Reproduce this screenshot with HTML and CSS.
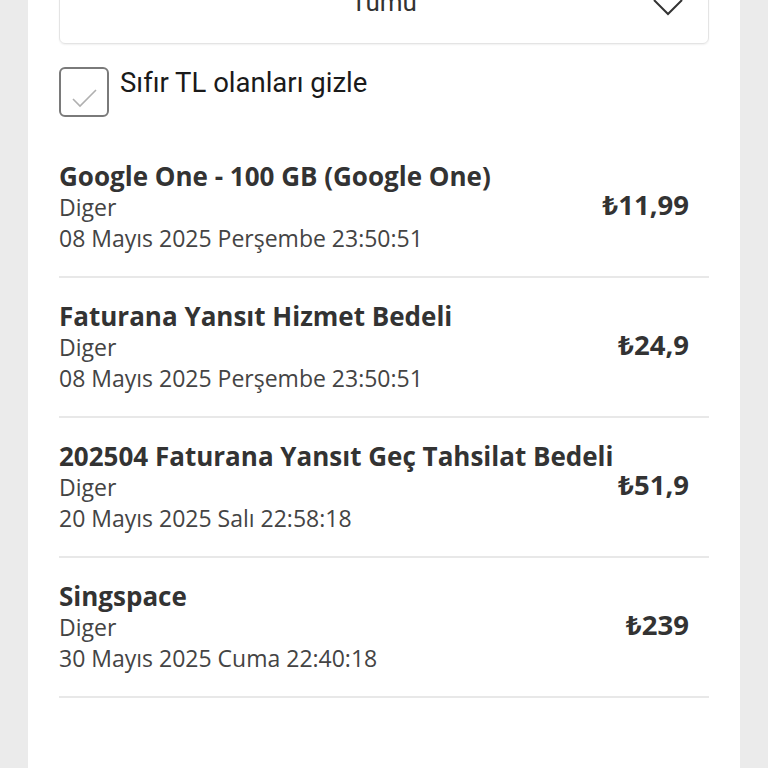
FILE: index.html
```html
<!DOCTYPE html>
<html lang="tr">
<head>
<meta charset="utf-8">
<link rel="stylesheet" href="styles.css">
</head>
<body>
<div class="card">
  <div class="dropdown">
    <span class="dd-text">Tümü</span>
    <svg class="chev" width="32" height="18" viewBox="0 0 32 18"><polyline points="2,1 16,15 30,1" fill="none" stroke="#333" stroke-width="2"/></svg>
  </div>
  <label class="check-row">
    <span class="box"><svg width="46" height="46" viewBox="0 0 46 46"><polyline points="12,30 19,37 35,21" fill="none" stroke="#b0b0b0" stroke-width="1.6"/></svg></span>
    <span class="check-label">Sıfır TL olanları gizle</span>
  </label>
  <ul class="list">
    <li class="item">
      <div class="info">
        <div class="title">Google One - 100 GB (Google One)</div>
        <div class="sub">Diger</div>
        <div class="sub">08 Mayıs 2025 Perşembe 23:50:51</div>
      </div>
      <div class="amount">₺11,99</div>
    </li>
    <li class="item">
      <div class="info">
        <div class="title">Faturana Yansıt Hizmet Bedeli</div>
        <div class="sub">Diger</div>
        <div class="sub">08 Mayıs 2025 Perşembe 23:50:51</div>
      </div>
      <div class="amount">₺24,9</div>
    </li>
    <li class="item">
      <div class="info">
        <div class="title">202504 Faturana Yansıt Geç Tahsilat Bedeli</div>
        <div class="sub">Diger</div>
        <div class="sub">20 Mayıs 2025 Salı 22:58:18</div>
      </div>
      <div class="amount">₺51,9</div>
    </li>
    <li class="item">
      <div class="info">
        <div class="title">Singspace</div>
        <div class="sub">Diger</div>
        <div class="sub">30 Mayıs 2025 Cuma 22:40:18</div>
      </div>
      <div class="amount">₺239</div>
    </li>
  </ul>
</div>
</body>
</html>
```
FILE: styles.css
```css
html, body {
  margin: 0;
  padding: 0;
  height: 100%;
  overflow: hidden;
  background: #ebebeb;
}
body {
  font-family: "Open Sans", "Noto Sans", sans-serif;
}
.card {
  display: flow-root;
  margin: 0 28px;
  background: #fff;
  min-height: 100%;
  padding: 0 31px;
}
.dropdown {
  height: 84px;
  margin-top: -40px;
  box-sizing: border-box;
  border: 1px solid #e4e4e4;
  border-radius: 6px;
  box-shadow: 0 1px 2px rgba(0,0,0,0.06);
  display: flex;
  align-items: center;
  justify-content: center;
  position: relative;
}
.dd-text {
  font-family: Roboto, sans-serif;
  font-size: 26px;
  color: #333;
}
.chev {
  position: absolute;
  right: 24px;
  top: 38px;
}
.check-row {
  display: flex;
  align-items: flex-start;
  gap: 11px;
  margin-top: 23px;
}
.box {
  width: 50px;
  height: 50px;
  box-sizing: border-box;
  border: 2px solid #7a7a7a;
  border-radius: 6px;
  display: block;
  flex: none;
}
.box svg { display: block; }
.check-label {
  font-family: Roboto, sans-serif;
  font-size: 27.5px;
  color: #1a1a1a;
  line-height: 32px;
}
.list {
  list-style: none;
  margin: 43px 0 0;
  padding: 0;
}
.item {
  display: flex;
  align-items: center;
  justify-content: space-between;
  border-bottom: 2px solid #e8e8e8;
  padding: 0 20px 22px 0;
  margin-bottom: 22px;
}
.title {
  font-weight: 700;
  font-size: 26px;
  line-height: 32px;
  color: #333;
}
.sub {
  font-size: 23px;
  line-height: 31px;
  color: #444;
}
.amount {
  font-weight: 700;
  font-size: 27.5px;
  color: #333;
  margin-top: -6px;
}
```
